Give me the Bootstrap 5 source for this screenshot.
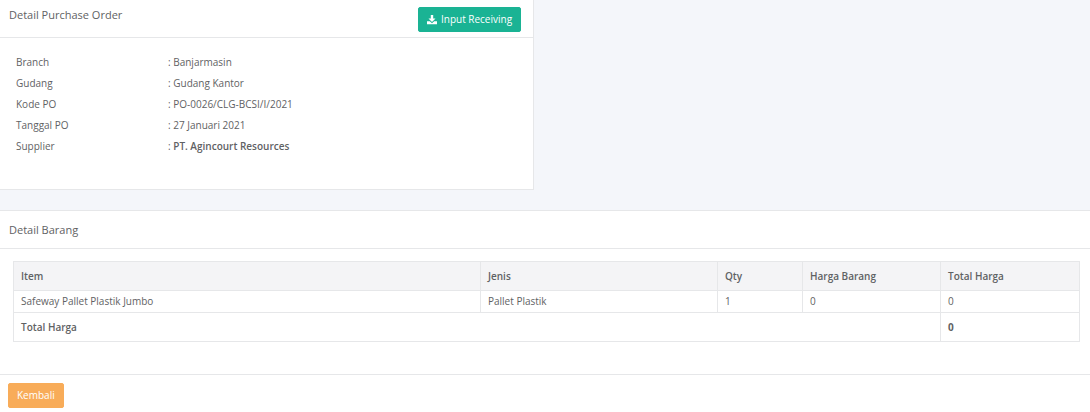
<!DOCTYPE html>
<html lang="id">
<head>
<meta charset="utf-8">
<meta name="viewport" content="width=device-width, initial-scale=1">
<title>Detail Purchase Order</title>
<link href="https://cdn.jsdelivr.net/npm/bootstrap@5.3.0/dist/css/bootstrap.min.css" rel="stylesheet">
<style>
  body { background: #f4f6fa; color: #5f6264; font-family: "Open Sans", sans-serif; font-size: 10px; line-height: 21px; }
  .panel { background: #fff; border: 0 solid #e6e7e9; }
  .panel-order { width: 49%; border-width: 0 1px 1px 0; }
  .panel-items { border-top-width: 1px; margin-top: 20px; min-height: calc(100vh - 210px); }
  .panel-head { min-height: 38px; padding: 0 12px 0 9px; border-bottom: 1px solid #e6e7e9; }
  .panel-head h2 { font-size: 11px; font-weight: 400; line-height: 15px; }
  .panel-order .panel-head { padding-top: 7px; }
  .order-body { padding: 14px 16px 32px; }
  .order-body dt { font-weight: 400; width: 152px; }
  .btn-small { --bs-btn-font-size: 10px; --bs-btn-padding-y: 4px; --bs-btn-padding-x: 8px; --bs-btn-border-radius: 2px; --bs-btn-line-height: 15px; --bs-btn-color: #fff; --bs-btn-hover-color: #fff; --bs-btn-active-color: #fff; }
  .btn-receive { --bs-btn-bg: #1ab394; --bs-btn-border-color: #1ab394; --bs-btn-hover-bg: #18a689; --bs-btn-active-bg: #18a689; }
  .btn-back { --bs-btn-bg: #f8ac59; --bs-btn-border-color: #f8ac59; --bs-btn-hover-bg: #f7a54a; --bs-btn-active-bg: #f7a54a; }
  .items-body { padding: 12px 10px 32px 13px; }
  .items-table { --bs-table-color: #5f6264; --bs-table-bg: #fff; table-layout: fixed; border-color: #e6e7e9; line-height: 15px; }
  .items-table > tbody > tr > td { padding: 3px 7px; }
  .items-table th { font-weight: 600; }
  .items-table > thead > tr > th { --bs-table-bg: #f4f4f6; border-bottom-color: #dddddf; padding: 7px 7px 6px; }
  .items-table > tfoot > tr > * { padding: 7px 7px 6px; }
  .col-kind { width: 237px; } .col-qty { width: 85px; } .col-price { width: 138px; } .col-total { width: 139px; }
  .items-foot { border-top: 1px solid #e6e7e9; padding: 8px; }
</style>
<script src="https://cdn.jsdelivr.net/npm/bootstrap@5.3.0/dist/js/bootstrap.bundle.min.js" defer></script>
</head>
<body>
<main>
  <section class="panel panel-order">
    <header class="panel-head d-flex justify-content-between align-items-start">
      <h2 class="mb-0">Detail Purchase Order</h2>
      <button type="button" class="btn btn-small btn-receive d-flex align-items-center gap-1">
        <svg width="10" height="10" viewBox="0 0 10 10" fill="currentColor" aria-hidden="true"><path d="M3.8 0h2.4v3.4h2.3L5 6.9 1.5 3.4h2.3zM0 6.2h2.8L5 8.2l2.2-2H10v3H0z"/></svg>
        Input Receiving
      </button>
    </header>
    <div class="order-body">
      <dl class="mb-0">
        <div class="d-flex"><dt>Branch</dt><dd class="mb-0">: Banjarmasin</dd></div>
        <div class="d-flex"><dt>Gudang</dt><dd class="mb-0">: Gudang Kantor</dd></div>
        <div class="d-flex"><dt>Kode PO</dt><dd class="mb-0">: PO-0026/CLG-BCSI/I/2021</dd></div>
        <div class="d-flex"><dt>Tanggal PO</dt><dd class="mb-0">: 27 Januari 2021</dd></div>
        <div class="d-flex"><dt>Supplier</dt><dd class="mb-0">: <span class="fw-semibold">PT. Agincourt Resources</span></dd></div>
      </dl>
    </div>
  </section>

  <section class="panel panel-items">
    <header class="panel-head d-flex align-items-center">
      <h2 class="mb-0">Detail Barang</h2>
    </header>
    <div class="items-body">
      <table class="table table-bordered items-table mb-0">
        <colgroup><col><col class="col-kind"><col class="col-qty"><col class="col-price"><col class="col-total"></colgroup>
        <thead><tr><th scope="col">Item</th><th scope="col">Jenis</th><th scope="col">Qty</th><th scope="col">Harga Barang</th><th scope="col">Total Harga</th></tr></thead>
        <tbody><tr><td>Safeway Pallet Plastik Jumbo</td><td>Pallet Plastik</td><td>1</td><td>0</td><td>0</td></tr></tbody>
        <tfoot><tr><th scope="row" colspan="4">Total Harga</th><td class="fw-bold">0</td></tr></tfoot>
      </table>
    </div>
    <footer class="items-foot"><button type="button" class="btn btn-small btn-back">Kembali</button></footer>
  </section>
</main>
</body>
</html>
